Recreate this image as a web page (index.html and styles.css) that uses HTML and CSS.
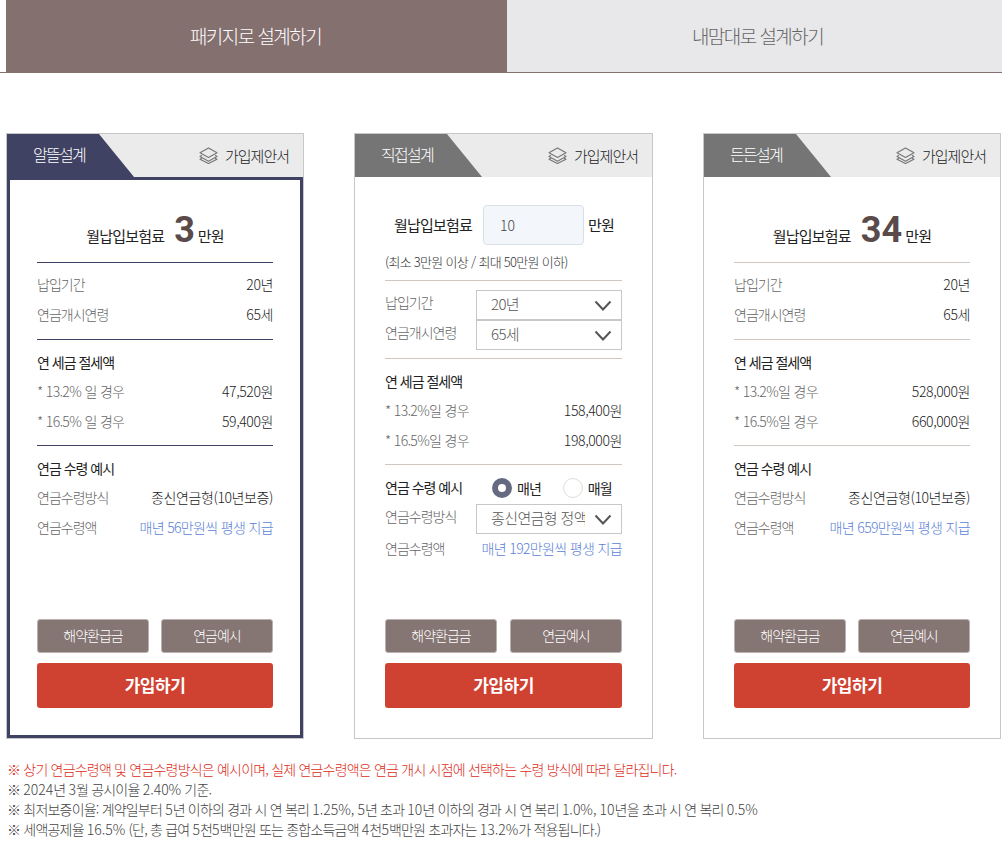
FILE: index.html
```html
<!DOCTYPE html>
<html lang="ko">
<head>
<meta charset="utf-8">
<title>연금 설계</title>
<link rel="stylesheet" href="styles.css">
</head>
<body>
<svg class="sprite" width="0" height="0" aria-hidden="true">
  <symbol id="layers" viewBox="0 0 20 18">
    <path d="M10 1 19 6 10 11 1 6Z" fill="none" stroke="currentColor" stroke-width="1.2" stroke-linejoin="round"/>
    <path d="M3 8.8 1 10 10 15 19 10 17 8.8M3 12 1 13 10 17.5 19 13 17 12" fill="none" stroke="currentColor" stroke-width="1.2" stroke-linejoin="round"/>
  </symbol>
  <symbol id="chev" viewBox="0 0 18 12">
    <path d="M1.5 1.5 9 9.5 16.5 1.5" fill="none" stroke="currentColor" stroke-width="2"/>
  </symbol>
</svg>

<nav class="tabs">
  <a class="tab tab-on">패키지로 설계하기</a>
  <a class="tab">내맘대로 설계하기</a>
</nav>

<main class="cards">
  <section class="card card-selected">
    <header class="card-head">
      <h2 class="card-title">알뜰설계</h2>
      <a class="proposal"><svg class="layers"><use href="#layers"/></svg>가입제안서</a>
    </header>
    <div class="card-body">
      <div class="summary">
        <span class="summary-label">월납입보험료</span><strong class="amount">3</strong><span class="summary-unit">만원</span>
      </div>
      <div class="block">
        <div class="row"><span class="key">납입기간</span><span class="val">20년</span></div>
        <div class="row"><span class="key">연금개시연령</span><span class="val">65세</span></div>
      </div>
      <div class="block">
        <h3 class="block-title">연 세금 절세액</h3>
        <div class="row"><span class="key key-num">* 13.2% 일 경우</span><span class="val">47,520원</span></div>
        <div class="row"><span class="key key-num">* 16.5% 일 경우</span><span class="val">59,400원</span></div>
      </div>
      <div class="block block-last">
        <h3 class="block-title">연금 수령 예시</h3>
        <div class="row"><span class="key">연금수령방식</span><span class="val">종신연금형(10년보증)</span></div>
        <div class="row"><span class="key">연금수령액</span><span class="val val-blue">매년 56만원씩 평생 지급</span></div>
      </div>
      <div class="actions">
        <div class="action-row"><a class="btn">해약환급금</a><a class="btn">연금예시</a></div>
        <a class="join">가입하기</a>
      </div>
    </div>
  </section>

  <section class="card card-wide">
    <header class="card-head">
      <h2 class="card-title">직접설계</h2>
      <a class="proposal"><svg class="layers"><use href="#layers"/></svg>가입제안서</a>
    </header>
    <div class="card-body">
      <div class="direct">
        <div class="direct-input">
          <span class="summary-label">월납입보험료</span>
          <input class="money" type="text" value="10">
          <span class="summary-unit">만원</span>
        </div>
        <p class="limit">(최소 3만원 이상 / 최대 50만원 이하)</p>
      </div>
      <div class="block block-form">
        <div class="row-form"><span class="key">납입기간</span>
          <div class="select"><span class="select-text">20년</span><svg class="chev"><use href="#chev"/></svg></div></div>
        <div class="row-form"><span class="key">연금개시연령</span>
          <div class="select"><span class="select-text">65세</span><svg class="chev"><use href="#chev"/></svg></div></div>
      </div>
      <div class="block">
        <h3 class="block-title">연 세금 절세액</h3>
        <div class="row"><span class="key key-num">* 13.2%일 경우</span><span class="val">158,400원</span></div>
        <div class="row"><span class="key key-num">* 16.5%일 경우</span><span class="val">198,000원</span></div>
      </div>
      <div class="block block-last">
        <div class="radio-row">
          <h3 class="block-title">연금 수령 예시</h3>
          <span class="radio"><i class="dot dot-on"></i>매년</span>
          <span class="radio"><i class="dot"></i>매월</span>
        </div>
        <div class="row-form"><span class="key">연금수령방식</span>
          <div class="select"><span class="select-text">종신연금형 정액형</span><svg class="chev"><use href="#chev"/></svg></div></div>
        <div class="row"><span class="key">연금수령액</span><span class="val val-blue">매년 192만원씩 평생 지급</span></div>
      </div>
      <div class="actions">
        <div class="action-row"><a class="btn">해약환급금</a><a class="btn">연금예시</a></div>
        <a class="join">가입하기</a>
      </div>
    </div>
  </section>

  <section class="card">
    <header class="card-head">
      <h2 class="card-title">든든설계</h2>
      <a class="proposal"><svg class="layers"><use href="#layers"/></svg>가입제안서</a>
    </header>
    <div class="card-body">
      <div class="summary">
        <span class="summary-label">월납입보험료</span><strong class="amount">34</strong><span class="summary-unit">만원</span>
      </div>
      <div class="block">
        <div class="row"><span class="key">납입기간</span><span class="val">20년</span></div>
        <div class="row"><span class="key">연금개시연령</span><span class="val">65세</span></div>
      </div>
      <div class="block">
        <h3 class="block-title">연 세금 절세액</h3>
        <div class="row"><span class="key key-num">* 13.2%일 경우</span><span class="val">528,000원</span></div>
        <div class="row"><span class="key key-num">* 16.5%일 경우</span><span class="val">660,000원</span></div>
      </div>
      <div class="block block-last">
        <h3 class="block-title">연금 수령 예시</h3>
        <div class="row"><span class="key">연금수령방식</span><span class="val">종신연금형(10년보증)</span></div>
        <div class="row"><span class="key">연금수령액</span><span class="val val-blue">매년 659만원씩 평생 지급</span></div>
      </div>
      <div class="actions">
        <div class="action-row"><a class="btn">해약환급금</a><a class="btn">연금예시</a></div>
        <a class="join">가입하기</a>
      </div>
    </div>
  </section>
</main>

<ul class="notes">
  <li class="note-red">※ 상기 연금수령액 및 연금수령방식은 예시이며, 실제 연금수령액은 연금 개시 시점에 선택하는 수령 방식에 따라 달라집니다.</li>
  <li>※ <span class="num">2024</span>년 <span class="num">3</span>월 공시이율 <span class="num">2.40%</span> 기준.</li>
  <li>※ 최저보증이율: 계약일부터 <span class="num">5</span>년 이하의 경과 시 연 복리 <span class="num">1.25%,</span> <span class="num">5</span>년 초과 <span class="num">10</span>년 이하의 경과 시 연 복리 <span class="num">1.0%,</span> <span class="num">10</span>년을 초과 시 연 복리 <span class="num">0.5%</span></li>
  <li>※ 세액공제율 <span class="num">16.5%</span> (단, 총 급여 <span class="num">5</span>천<span class="num">5</span>백만원 또는 종합소득금액 <span class="num">4</span>천<span class="num">5</span>백만원 초과자는 <span class="num">13.2%</span>가 적용됩니다.)</li>
</ul>
</body>
</html>
```
FILE: styles.css
```css
* { box-sizing: border-box; }
html, body { margin: 0; padding: 0; background: #fff; }
body {
  font-family: "Noto Sans CJK KR", "Noto Sans", sans-serif;
  font-size: 14px;
  font-weight: 300;
  letter-spacing: -1px;
  color: #222;
  overflow: hidden;
}
.sprite { position: absolute; }

.tabs {
  display: flex;
  padding-left: 6px;
  height: 73px;
  border-bottom: 1px solid #857070;
}
.tab {
  display: flex;
  align-items: center;
  justify-content: center;
  flex: 1;
  padding: 0 0 2px 6px;
  font-size: 19px;
  letter-spacing: -1.55px;
  background: #e8e8ea;
  color: #666;
}
.tab-on { flex: 0 0 501px; padding: 0 2px 2px 0; background: #857070; color: #fff; }

.cards {
  display: flex;
  gap: 50px;
  padding: 60px 0 0 6px;
}
.card {
  width: 298px;
  height: 606px;
  border: 1px solid #c8c8c8;
  display: flex;
  flex-direction: column;
  --accent: #757575;
}
.card-wide { width: 299px; }
.card-selected { --accent: #3f4263; }

.card-head {
  height: 43px;
  background: #ebebeb;
  position: relative;
  display: flex;
  justify-content: flex-end;
  align-items: center;
  padding-right: 14px;
}
.card-title {
  position: absolute;
  left: 0; top: 0; bottom: 0;
  width: 127px;
  margin: 0;
  padding: 8px 0 0 26px;
  font-size: 16px;
  line-height: 24px;
  font-weight: 300;
  letter-spacing: -1.7px;
  color: #fff;
  background: var(--accent);
  clip-path: polygon(0 0, 92px 0, 100% 100%, 0 100%);
}
.proposal { display: flex; align-items: center; gap: 7px; font-size: 15px; color: #222; }
.layers { width: 19px; height: 17px; color: #777; }

.card-body {
  flex: 1;
  border: 3px solid transparent;
  padding: 0 27px 27px;
  display: flex;
  flex-direction: column;
}
.card-selected .card-body { border-color: var(--accent); }

.summary {
  height: 83px;
  border-bottom: 1px solid #cfc8c2;
  display: flex;
  justify-content: center;
  align-items: baseline;
  padding-top: 27px;
}
.card-selected .summary,
.card-selected .block { border-color: #3f4263; }
.summary-label, .summary-unit { font-size: 15px; font-weight: 400; letter-spacing: -.8px; color: #222; }
.amount {
  font-family: Roboto, "Noto Sans", sans-serif;
  font-size: 36px;
  font-weight: 700;
  color: #5a4a4a;
  letter-spacing: 0;
  margin: 0 3px 0 10px;
  line-height: 46px;
}

.block {
  padding: 7px 0 9px;
  border-bottom: 1px solid #cfc8c2;
}
.block + .block { padding: 8px 0 8px; }
.block-last { border-bottom: 0; }
.block-title { margin: 0; height: 29px; line-height: 28px; font-size: 14px; font-weight: 400; color: #222; }
.row { display: flex; justify-content: space-between; height: 30px; line-height: 28px; }
.key { color: #666; }
.key-num { letter-spacing: -.65px; }
.val { color: #1c1c1c; letter-spacing: -.4px; }
.val-blue { color: #5b7fd6; letter-spacing: -.65px; }

.direct { border-bottom: 1px solid #cfc8c2; padding-top: 25px; height: 101px; }
.direct-input { display: flex; align-items: center; height: 40px; padding: 0 0 2px 9px; }
.money {
  width: 101px;
  height: 40px;
  margin: 2px 4px 0 11px;
  padding: 0 16px;
  border: 1px solid #d8e0e6;
  border-radius: 4px;
  background: #f3f7fb;
  font: inherit;
  font-size: 14px;
  letter-spacing: 0;
  color: #444;
}
.limit { margin: 7px 0 0; line-height: 20px; font-size: 13px; color: #333; letter-spacing: -.7px; }

.block-form { padding: 9px 0 8px; }
.row-form { display: flex; justify-content: space-between; height: 30px; line-height: 24px; }
.select {
  width: 146px;
  height: 30px;
  border: 1px solid #c8c8c8;
  position: relative;
  padding: 1px 36px 0 14px;
  color: #555;
  font-size: 15px;
  letter-spacing: -.6px;
  overflow: hidden;
  white-space: nowrap;
}
.select-text { display: block; overflow: hidden; }
.chev { position: absolute; right: 9px; top: 9px; width: 18px; height: 12px; color: #555; }

.radio-row { display: flex; align-items: flex-start; height: 31px; }
.radio-row .block-title { flex: 0 0 107px; }
.radio { display: flex; align-items: center; gap: 5px; flex: 0 0 auto; height: 29px; margin-right: 22px; color: #222; font-weight: 400; font-size: 14px; letter-spacing: -1px; }
.radio:last-child { margin-right: 0; }
.dot { width: 20px; height: 20px; border-radius: 50%; border: 1px solid #ddd; background: #fff; }
.dot-on { border: 6px solid #666a80; }

.actions { margin-top: auto; }
.action-row { display: flex; justify-content: space-between; margin-bottom: 10px; }
.btn {
  width: 112px;
  height: 34px;
  border: 1px solid #b9b2b0;
  border-radius: 3px;
  background: #857573;
  color: #fff;
  text-align: center;
  line-height: 30px;
}
.join {
  display: block;
  height: 45px;
  border-radius: 3px;
  background: #cf4232;
  color: #fff;
  text-align: center;
  line-height: 43px;
  font-size: 17px;
  letter-spacing: -.5px;
  font-weight: 700;
}

.notes {
  list-style: none;
  margin: 20px 0 0;
  padding: 0 0 0 7px;
  font-size: 14px;
  line-height: 20px;
  color: #444;
  letter-spacing: -.8px;
}
.num { letter-spacing: 0; }
.note-red { color: #dd2c20; }
```
